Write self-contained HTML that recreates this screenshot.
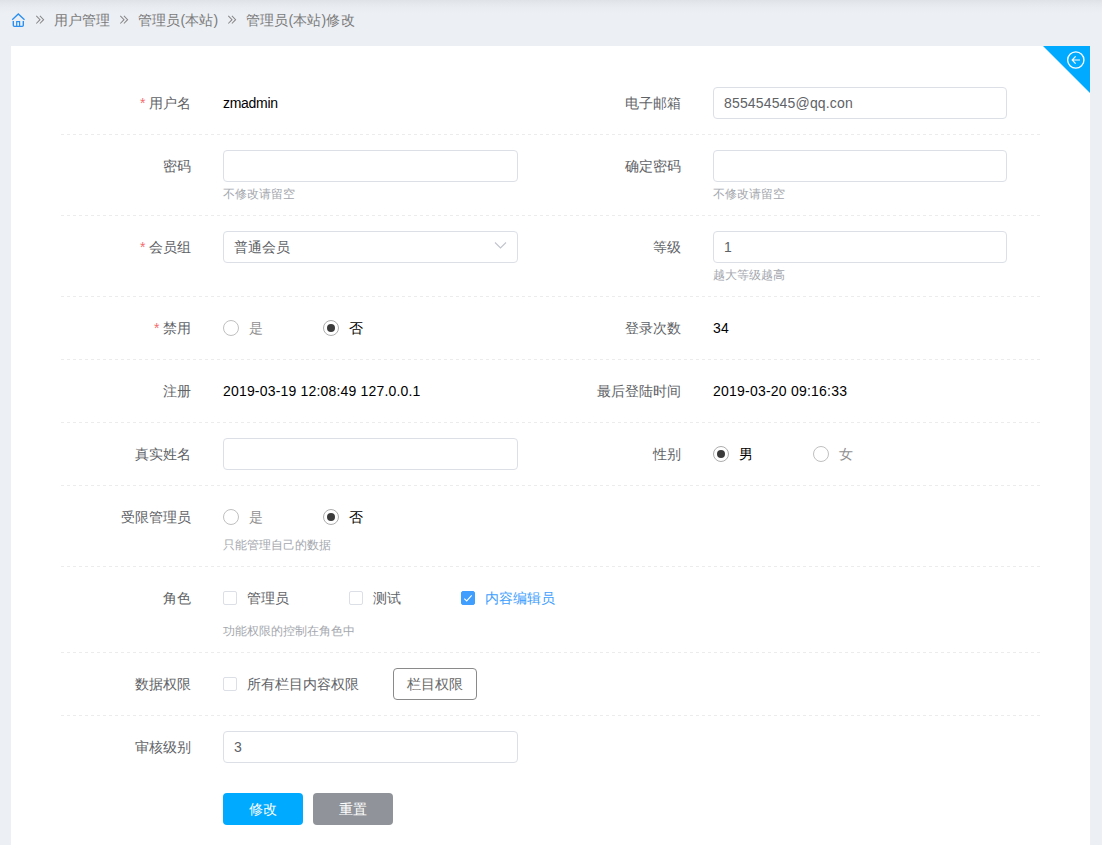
<!DOCTYPE html>
<html lang="zh">
<head>
<meta charset="utf-8">
<title>管理员(本站)修改</title>
<style>
*{box-sizing:border-box;margin:0;padding:0}
html,body{width:1102px;height:845px;overflow:hidden}
body{background:#eceff4;font-family:"Liberation Sans",sans-serif;font-size:14px;color:#606266;position:relative}
.topshade{position:absolute;left:0;top:0;width:1102px;height:13px;background:linear-gradient(#dfe2e6 0,#e5e8ec 30%,#e9ecf1 60%,#eceff4 100%)}
.crumb{position:absolute;left:0;top:0;height:40px;width:1102px;color:#777}
.crumb span{position:absolute;top:10px;line-height:20px;font-size:14px;white-space:nowrap;color:#7a7a7a}
.crumb svg{position:absolute}
.card{position:absolute;left:11px;top:46px;width:1079px;height:799px;background:#fff}
.corner{position:absolute;left:1043px;top:46px;width:47px;height:47px}
.dash{position:absolute;left:61px;width:979px;height:1px;background:repeating-linear-gradient(90deg,#ececec 0,#ececec 3px,transparent 3px,transparent 5.98773px)}
.lab{position:absolute;width:140px;text-align:right;line-height:32px;height:32px;font-size:14px;color:#606266;white-space:nowrap}
.lab i{font-style:normal;color:#f56c6c;margin-right:4px}
.l1{left:51.4px}
.l2{left:541.4px}
.inp{position:absolute;height:32px;border:1px solid #dcdfe6;border-radius:4px;background:#fff;line-height:30px;padding:0 10px;font-size:14px;color:#606266;white-space:nowrap}
.i1{left:223px;width:295px}
.i2{left:713px;width:294px}
.txt{position:absolute;line-height:32px;height:32px;font-size:14px;color:#000;white-space:nowrap}
.help{position:absolute;font-size:12px;line-height:24px;height:24px;color:#a4a7ae;white-space:nowrap}
.radio{position:absolute;width:16px;height:16px;border:1px solid #c0c0c0;border-radius:50%;background:#fff}
.radio.on{border-color:#adadad}
.radio.on:after{content:"";position:absolute;left:3px;top:3px;width:8px;height:8px;border-radius:50%;background:#3b3b3b}
.rl{position:absolute;line-height:32px;height:32px;font-size:14px;white-space:nowrap;color:#909090}
.rl.on{color:#000}
.cb{position:absolute;width:14px;height:14px;border:1px solid #dcdfe6;border-radius:2px;background:#fff}
.cb.on{background:#409eff;border-color:#409eff}
.cl{position:absolute;line-height:32px;height:32px;font-size:14px;white-space:nowrap;color:#606266}
.cl.on{color:#409eff}
.btn{position:absolute;height:32px;line-height:32px;border-radius:4px;text-align:center;font-size:14px;color:#fff;white-space:nowrap}
</style>
</head>
<body>
<div class="topshade"></div>
<div class="crumb">
  <svg style="left:11px;top:12px" width="15" height="16" viewBox="0 0 15 16"><path d="M1.2 7.7 L7.3 1.9 L13.5 7.7" fill="none" stroke="#2a8ff0" stroke-width="1.35" stroke-linecap="butt"/><path d="M2.3 9 V13.3 Q2.3 14.4 3.4 14.4 H11.2 Q12.3 14.4 12.3 13.3 V9" fill="none" stroke="#2a8ff0" stroke-width="1.4"/><path d="M5.7 14.4 V9.7 H8.6 V14.4" fill="none" stroke="#2a8ff0" stroke-width="1.2"/></svg>
  <svg style="left:35px;top:15px" width="10" height="10" viewBox="0 0 10 10"><path d="M1.3 0.9 L5 4.7 L1.3 8.5 M4.9 0.9 L8.6 4.7 L4.9 8.5" fill="none" stroke="#888" stroke-width="1.05"/></svg>
  <span style="left:54px">用户管理</span>
  <svg style="left:119px;top:15px" width="10" height="10" viewBox="0 0 10 10"><path d="M1.3 0.9 L5 4.7 L1.3 8.5 M4.9 0.9 L8.6 4.7 L4.9 8.5" fill="none" stroke="#888" stroke-width="1.05"/></svg>
  <span style="left:138px;letter-spacing:0.15px">管理员(本站)</span>
  <svg style="left:227px;top:15px" width="10" height="10" viewBox="0 0 10 10"><path d="M1.3 0.9 L5 4.7 L1.3 8.5 M4.9 0.9 L8.6 4.7 L4.9 8.5" fill="none" stroke="#888" stroke-width="1.05"/></svg>
  <span style="left:246px;letter-spacing:0.15px">管理员(本站)修改</span>
</div>

<div class="card"></div>
<svg class="corner" viewBox="0 0 47 47"><path d="M0 0 H47 V47 Z" fill="#00aaff"/><circle cx="32.8" cy="14" r="8.15" fill="none" stroke="#fff" stroke-width="1.35"/><path d="M37 14 H29.4 M32.6 10.4 L29.2 14 L32.6 17.6" fill="none" stroke="#fff" stroke-width="1.2"/></svg>

<!-- row 1 -->
<div class="lab l1" style="top:87px"><i>*</i>用户名</div>
<div class="txt" style="left:223px;top:87px;letter-spacing:-0.3px">zmadmin</div>
<div class="lab l2" style="top:87px">电子邮箱</div>
<div class="inp i2" style="top:87px;letter-spacing:0.16px">855454545@qq.con</div>
<div class="dash" style="top:134px"></div>

<!-- row 2 -->
<div class="lab l1" style="top:150px">密码</div>
<div class="inp i1" style="top:150px"></div>
<div class="help" style="left:223px;top:182px">不修改请留空</div>
<div class="lab l2" style="top:150px">确定密码</div>
<div class="inp i2" style="top:150px"></div>
<div class="help" style="left:713px;top:182px">不修改请留空</div>
<div class="dash" style="top:215px"></div>

<!-- row 3 -->
<div class="lab l1" style="top:231px"><i>*</i>会员组</div>
<div class="inp i1" style="top:231px">普通会员</div>
<svg style="position:absolute;left:494px;top:241px" width="13" height="9" viewBox="0 0 13 9"><path d="M1 1.5 L6.5 7 L12 1.5" fill="none" stroke="#c0c4cc" stroke-width="1.1"/></svg>
<div class="lab l2" style="top:231px">等级</div>
<div class="inp i2" style="top:231px">1</div>
<div class="help" style="left:713px;top:263px">越大等级越高</div>
<div class="dash" style="top:296px"></div>

<!-- row 4 -->
<div class="lab l1" style="top:312px"><i>*</i>禁用</div>
<div class="radio" style="left:223px;top:320px"></div>
<div class="rl" style="left:249px;top:312px">是</div>
<div class="radio on" style="left:323px;top:320px"></div>
<div class="rl on" style="left:349px;top:312px">否</div>
<div class="lab l2" style="top:312px">登录次数</div>
<div class="txt" style="left:713px;top:312px;letter-spacing:0.2px">34</div>
<div class="dash" style="top:359px"></div>

<!-- row 5 -->
<div class="lab l1" style="top:375px">注册</div>
<div class="txt" style="left:223px;top:375px;letter-spacing:0.18px">2019-03-19 12:08:49 127.0.0.1</div>
<div class="lab l2" style="top:375px">最后登陆时间</div>
<div class="txt" style="left:713px;top:375px;letter-spacing:0.22px">2019-03-20 09:16:33</div>
<div class="dash" style="top:422px"></div>

<!-- row 6 -->
<div class="lab l1" style="top:438px">真实姓名</div>
<div class="inp i1" style="top:438px"></div>
<div class="lab l2" style="top:438px">性别</div>
<div class="radio on" style="left:713px;top:446px"></div>
<div class="rl on" style="left:739px;top:438px">男</div>
<div class="radio" style="left:813px;top:446px"></div>
<div class="rl" style="left:839px;top:438px">女</div>
<div class="dash" style="top:485px"></div>

<!-- row 7 -->
<div class="lab l1" style="top:501px">受限管理员</div>
<div class="radio" style="left:223px;top:509px"></div>
<div class="rl" style="left:249px;top:501px">是</div>
<div class="radio on" style="left:323px;top:509px"></div>
<div class="rl on" style="left:349px;top:501px">否</div>
<div class="help" style="left:223px;top:533px">只能管理自己的数据</div>
<div class="dash" style="top:566px"></div>

<!-- row 8 -->
<div class="lab l1" style="top:582px">角色</div>
<div class="cb" style="left:223px;top:591px"></div>
<div class="cl" style="left:247px;top:582px">管理员</div>
<div class="cb" style="left:349px;top:591px"></div>
<div class="cl" style="left:373px;top:582px">测试</div>
<div class="cb on" style="left:461px;top:591px"></div>
<svg style="position:absolute;left:461px;top:591px" width="14" height="14" viewBox="0 0 14 14"><path d="M3.3 7.6 L5.7 9.9 L10.7 4.4" fill="none" stroke="#fff" stroke-width="1.05"/></svg>
<div class="cl on" style="left:485px;top:582px">内容编辑员</div>
<div class="help" style="left:223px;top:619px">功能权限的控制在角色中</div>
<div class="dash" style="top:652px"></div>

<!-- row 9 -->
<div class="lab l1" style="top:668px">数据权限</div>
<div class="cb" style="left:223px;top:677px"></div>
<div class="cl" style="left:247px;top:668px">所有栏目内容权限</div>
<div class="btn" style="left:393px;top:668px;width:84px;border:1px solid #8a8a8a;line-height:30px;color:#666;background:#fff">栏目权限</div>
<div class="dash" style="top:715px"></div>

<!-- row 10 -->
<div class="lab l1" style="top:731px">审核级别</div>
<div class="inp i1" style="top:731px">3</div>

<!-- buttons -->
<div class="btn" style="left:223px;top:793px;width:80px;background:#00aaff">修改</div>
<div class="btn" style="left:313px;top:793px;width:80px;background:#909399">重置</div>
</body>
</html>
